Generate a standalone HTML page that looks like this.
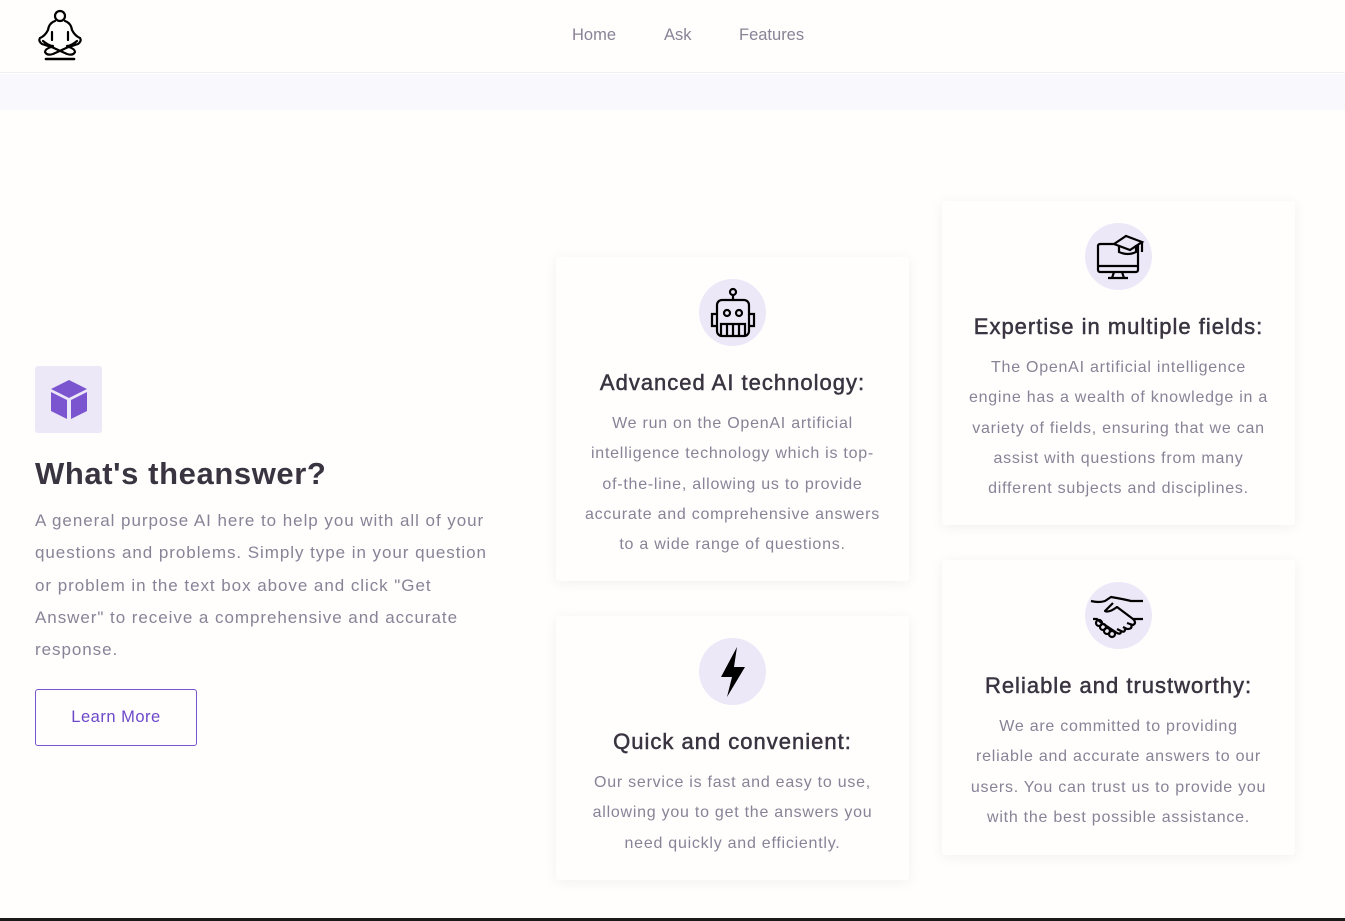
<!DOCTYPE html>
<html><head><style>
*{margin:0;padding:0;box-sizing:border-box}
body{width:1345px;height:921px;background:#fffefd;font-family:"Liberation Sans",sans-serif;position:relative;overflow:hidden}
.nav{position:absolute;top:0;left:0;width:1345px;height:73px;border-bottom:1px solid #f0eef2;background:#fffefd}
.nav a{position:absolute;top:26px;font-size:16.5px;color:#8a8296;text-decoration:none}
.band{position:absolute;top:74px;left:0;width:1345px;height:36px;background:#f9f9fd}
.card{position:absolute;width:353px;background:#fffefd;box-shadow:0 2px 14px rgba(0,0,0,0.06);border-radius:3px;text-align:center}
.ic{width:67px;height:67px;border-radius:50%;background:#ede8f7;margin:0 auto;display:flex;align-items:center;justify-content:center}
.card h3{font-size:22px;font-weight:normal;color:#3a3340;-webkit-text-stroke:0.5px #3a3340;margin-top:24px;white-space:nowrap;letter-spacing:1px}
.card p{font-size:16px;line-height:30.3px;color:#8a8296;margin:13px 0 0;white-space:nowrap;letter-spacing:0.75px}
.left h2{position:absolute;left:35px;top:456px;font-size:31px;color:#3a3340;font-weight:bold;letter-spacing:0.6px}
.left p{position:absolute;left:35px;top:505px;width:480px;font-size:17px;line-height:32.3px;color:#8a8296;white-space:nowrap;letter-spacing:0.95px}
.btn{position:absolute;left:35px;top:689px;width:162px;height:57px;border:1px solid #7b55d0;border-radius:3px;color:#6d48c8;font-size:16.5px;display:flex;align-items:center;justify-content:center;letter-spacing:0.5px}
</style></head><body>
<div class="nav">
<svg style="position:absolute;left:37px;top:8px" width="46" height="54" viewBox="0 0 46 54" fill="none" stroke="#000" stroke-width="2.2" stroke-linejoin="round" stroke-linecap="round">
<circle cx="23" cy="8" r="5"/>
<path d="M18 13 Q12 15 11 22 Q8 28 3 30 Q1 33 5 36 L14 39 M28 13 Q34 15 35 22 Q38 28 43 30 Q45 33 41 36 L32 39"/>
<path d="M15 24 L15 32 M31 24 L31 32 M6 33 Q12 38 16 38 M40 33 Q34 38 30 38"/>
<path d="M8 36 L30 46 Q36 48 38 44 Q38 41 32 39 M38 36 L16 46 Q10 48 8 44 Q8 41 14 39"/>
<path d="M9 51 L37 51" stroke-width="2.6"/>
</svg>
<a style="left:572px">Home</a><a style="left:664px">Ask</a><a style="left:739px">Features</a>
</div>
<div class="band"></div>
<div class="left">
<div style="position:absolute;left:35px;top:366px;width:67px;height:67px;background:#ede8f7;border-radius:3px;display:flex;align-items:center;justify-content:center">
<svg width="38" height="42" viewBox="0 0 38 42"><path d="M19 1 L37 10 L19 19 L1 10Z M1 13 L17 21 L17 40 L1 32Z M21 21 L37 13 L37 32 L21 40Z" fill="#7b55d0"/></svg></div>
<h2>What's theanswer?</h2>
<p>A general purpose AI here to help you with all of your<br>questions and problems. Simply type in your question<br>or problem in the text box above and click "Get<br>Answer" to receive a comprehensive and accurate<br>response.</p>
<div class="btn">Learn More</div>
</div>

<div class="card" style="left:556px;top:257px;height:324px;padding-top:22px">
<div class="ic"><svg width="54" height="54" viewBox="0 0 54 54" fill="none" stroke="#000" stroke-width="2.2"><circle cx="27" cy="6" r="3"/><path d="M27 9 V14"/><rect x="11" y="14" width="32" height="36" rx="5"/><path d="M11 28 H6 V40 H11 M43 28 H48 V40 H43"/><circle cx="21" cy="27" r="3"/><circle cx="33" cy="27" r="3"/><path d="M15 50 V38 H39 V50 M21 38 V50 M27 38 V50 M33 38 V50"/></svg></div>
<h3>Advanced AI technology:</h3>
<p>We run on the OpenAI artificial<br>intelligence technology which is top-<br>of-the-line, allowing us to provide<br>accurate and comprehensive answers<br>to a wide range of questions.</p>
</div>

<div class="card" style="left:556px;top:616px;height:264px;padding-top:22px">
<div class="ic"><svg width="40" height="54" viewBox="0 0 40 54"><path d="M24 2 L8 32 H19 L14 52 L32 22 H21 Z" fill="#000"/></svg></div>
<h3>Quick and convenient:</h3>
<p>Our service is fast and easy to use,<br>allowing you to get the answers you<br>need quickly and efficiently.</p>
</div>

<div class="card" style="left:942px;top:201px;height:324px;padding-top:22px">
<div class="ic"><svg width="54" height="54" viewBox="0 0 54 54" fill="none" stroke="#000" stroke-width="2.2"><rect x="6" y="14" width="40" height="28" rx="2"/><path d="M6 36 H46 M22 42 L20 48 H32 L30 42 M16 48 H36"/><path d="M22 14 L34 6 L50 12 L38 20 Z" fill="#ede8f7"/><path d="M27 16 V22 Q36 26 44 22 V15 M50 12 V22"/></svg></div>
<h3>Expertise in multiple fields:</h3>
<p>The OpenAI artificial intelligence<br>engine has a wealth of knowledge in a<br>variety of fields, ensuring that we can<br>assist with questions from many<br>different subjects and disciplines.</p>
</div>

<div class="card" style="left:942px;top:560px;height:295px;padding-top:22px">
<div class="ic"><svg width="64" height="54" viewBox="0 0 64 54" fill="none" stroke="#000" stroke-width="2.2" stroke-linejoin="round"><path d="M4 12 Q12 14 18 12 L24 8 Q36 10 44 12 Q50 12 56 12"/><path d="M26 14 L18 22 Q22 24 30 18 L46 30 Q50 34 46 36 L40 34 M44 36 Q46 40 40 40 L36 38 M38 40 Q38 44 34 42 L30 40 M56 30 L46 30"/><path d="M6 30 L10 30 Q14 34 18 36 L30 44 Q34 46 34 42"/><circle cx="12" cy="34" r="3"/><circle cx="16" cy="38" r="3"/><circle cx="20" cy="42" r="3"/><circle cx="25" cy="45" r="3"/></svg></div>
<h3>Reliable and trustworthy:</h3>
<p>We are committed to providing<br>reliable and accurate answers to our<br>users. You can trust us to provide you<br>with the best possible assistance.</p>
</div>

<div style="position:absolute;left:0;top:918px;width:1345px;height:3px;background:#1a1a1a"></div>
</body></html>
